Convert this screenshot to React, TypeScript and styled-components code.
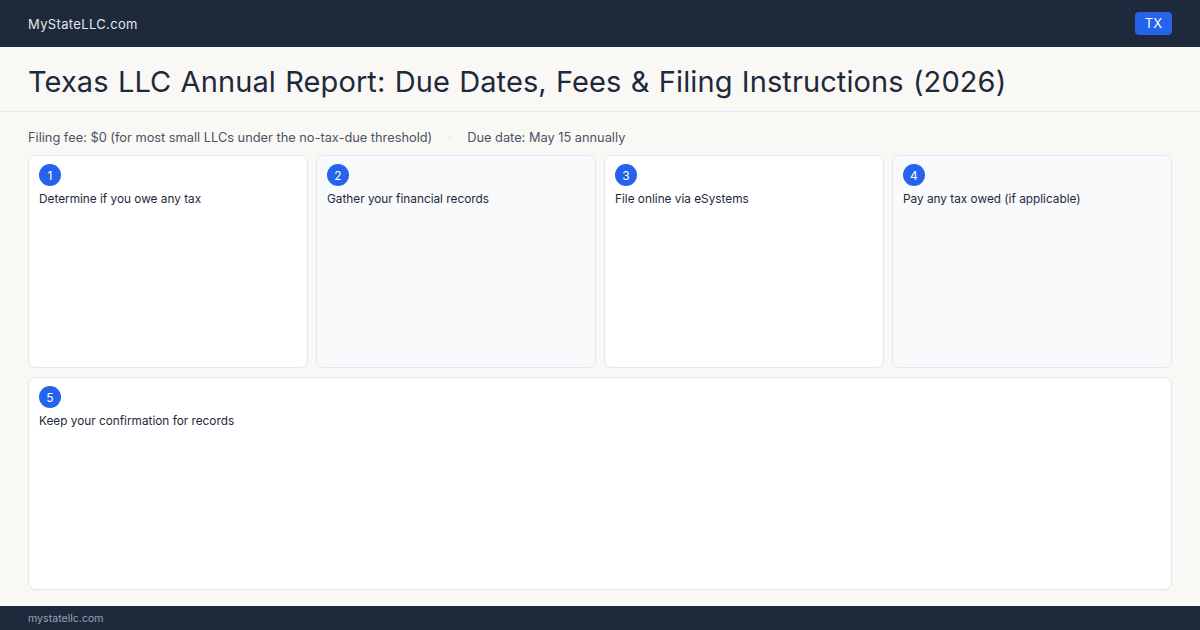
import React from "react";
import styled, { createGlobalStyle } from "styled-components";

const GlobalStyle = createGlobalStyle`
  html, body {
    margin: 0;
    padding: 0;
    background: #f9f8f5;
    font-family: Inter, "Liberation Sans", sans-serif;
    color: #1e293b;
  }
  #root {
    height: 630px;
  }
`;

const Page = styled.div`
  width: 1200px;
  height: 630px;
  display: flex;
  flex-direction: column;
  overflow: hidden;
`;

const TopBar = styled.header`
  height: 47px;
  flex-shrink: 0;
  background: #1e293b;
  display: flex;
  align-items: center;
  justify-content: space-between;
  padding: 0 28px;
  box-sizing: border-box;
`;

const Brand = styled.span`
  color: #e2e8f0;
  font-size: 13px;
  letter-spacing: 0.35px;
`;

const StateTag = styled.span`
  background: #2563eb;
  color: #ffffff;
  font-size: 13px;
  border-radius: 4px;
  padding: 4px 10px;
  line-height: 15px;
`;

const TitleBar = styled.div`
  height: 65px;
  flex-shrink: 0;
  box-sizing: border-box;
  border-bottom: 1px solid #e2e8f0;
  padding: 5px 28px 0;
  display: flex;
  align-items: center;
`;

const Title = styled.h1`
  margin: 0;
  font-size: 29px;
  font-weight: 400;
  color: #1e293b;
  letter-spacing: 0.1px;
  word-spacing: 1px;
`;

const Main = styled.main`
  flex: 1;
  display: flex;
  flex-direction: column;
  padding: 16px 28px 16px;
  box-sizing: border-box;
  gap: 9px;
`;

const Meta = styled.div`
  display: flex;
  align-items: center;
  gap: 16px;
  font-size: 12.8px;
  color: #475569;
  height: 18px;
`;

const Dot = styled.span`
  color: #cbd5e1;
  font-size: 10px;
`;

const Grid = styled.div`
  flex: 1;
  display: grid;
  grid-template-columns: repeat(4, 1fr);
  grid-template-rows: 1fr 1fr;
  gap: 9px 8px;
`;

const Card = styled.div<{ $tint: boolean; $wide?: boolean }>`
  background: ${(p) => (p.$tint ? "#f8fafc" : "#ffffff")};
  border: 1px solid #e2e8f0;
  border-radius: 8px;
  padding: 8px 10px;
  display: flex;
  flex-direction: column;
  gap: 5px;
  grid-column: ${(p) => (p.$wide ? "1 / -1" : "auto")};
`;

const StepNum = styled.span`
  width: 22px;
  height: 22px;
  border-radius: 50%;
  background: #2563eb;
  color: #ffffff;
  font-size: 12px;
  display: flex;
  align-items: center;
  justify-content: center;
`;

const StepText = styled.p`
  margin: 0;
  font-size: 11.8px;
  color: #1e293b;
  line-height: 16px;
`;

const Footer = styled.footer`
  height: 24px;
  flex-shrink: 0;
  background: #1e293b;
  color: #94a3b8;
  font-size: 10.6px;
  display: flex;
  align-items: center;
  padding: 0 28px;
`;

const steps = [
  "Determine if you owe any tax",
  "Gather your financial records",
  "File online via eSystems",
  "Pay any tax owed (if applicable)",
  "Keep your confirmation  for records",
];

export default function App() {
  return (
    <Page>
      <GlobalStyle />
      <TopBar>
        <Brand>MyStateLLC.com</Brand>
        <StateTag>TX</StateTag>
      </TopBar>
      <TitleBar>
        <Title>Texas LLC Annual Report: Due Dates, Fees &amp; Filing Instructions (2026)</Title>
      </TitleBar>
      <Main>
        <Meta>
          <span>Filing fee: $0 (for most small LLCs under the no-tax-due threshold)</span>
          <Dot>·</Dot>
          <span>Due date: May 15 annually</span>
        </Meta>
        <Grid>
          {steps.map((s, i) => (
            <Card key={i} $tint={i % 2 === 1} $wide={i === 4}>
              <StepNum>{i + 1}</StepNum>
              <StepText>{s}</StepText>
            </Card>
          ))}
        </Grid>
      </Main>
      <Footer>mystatellc.com</Footer>
    </Page>
  );
}
